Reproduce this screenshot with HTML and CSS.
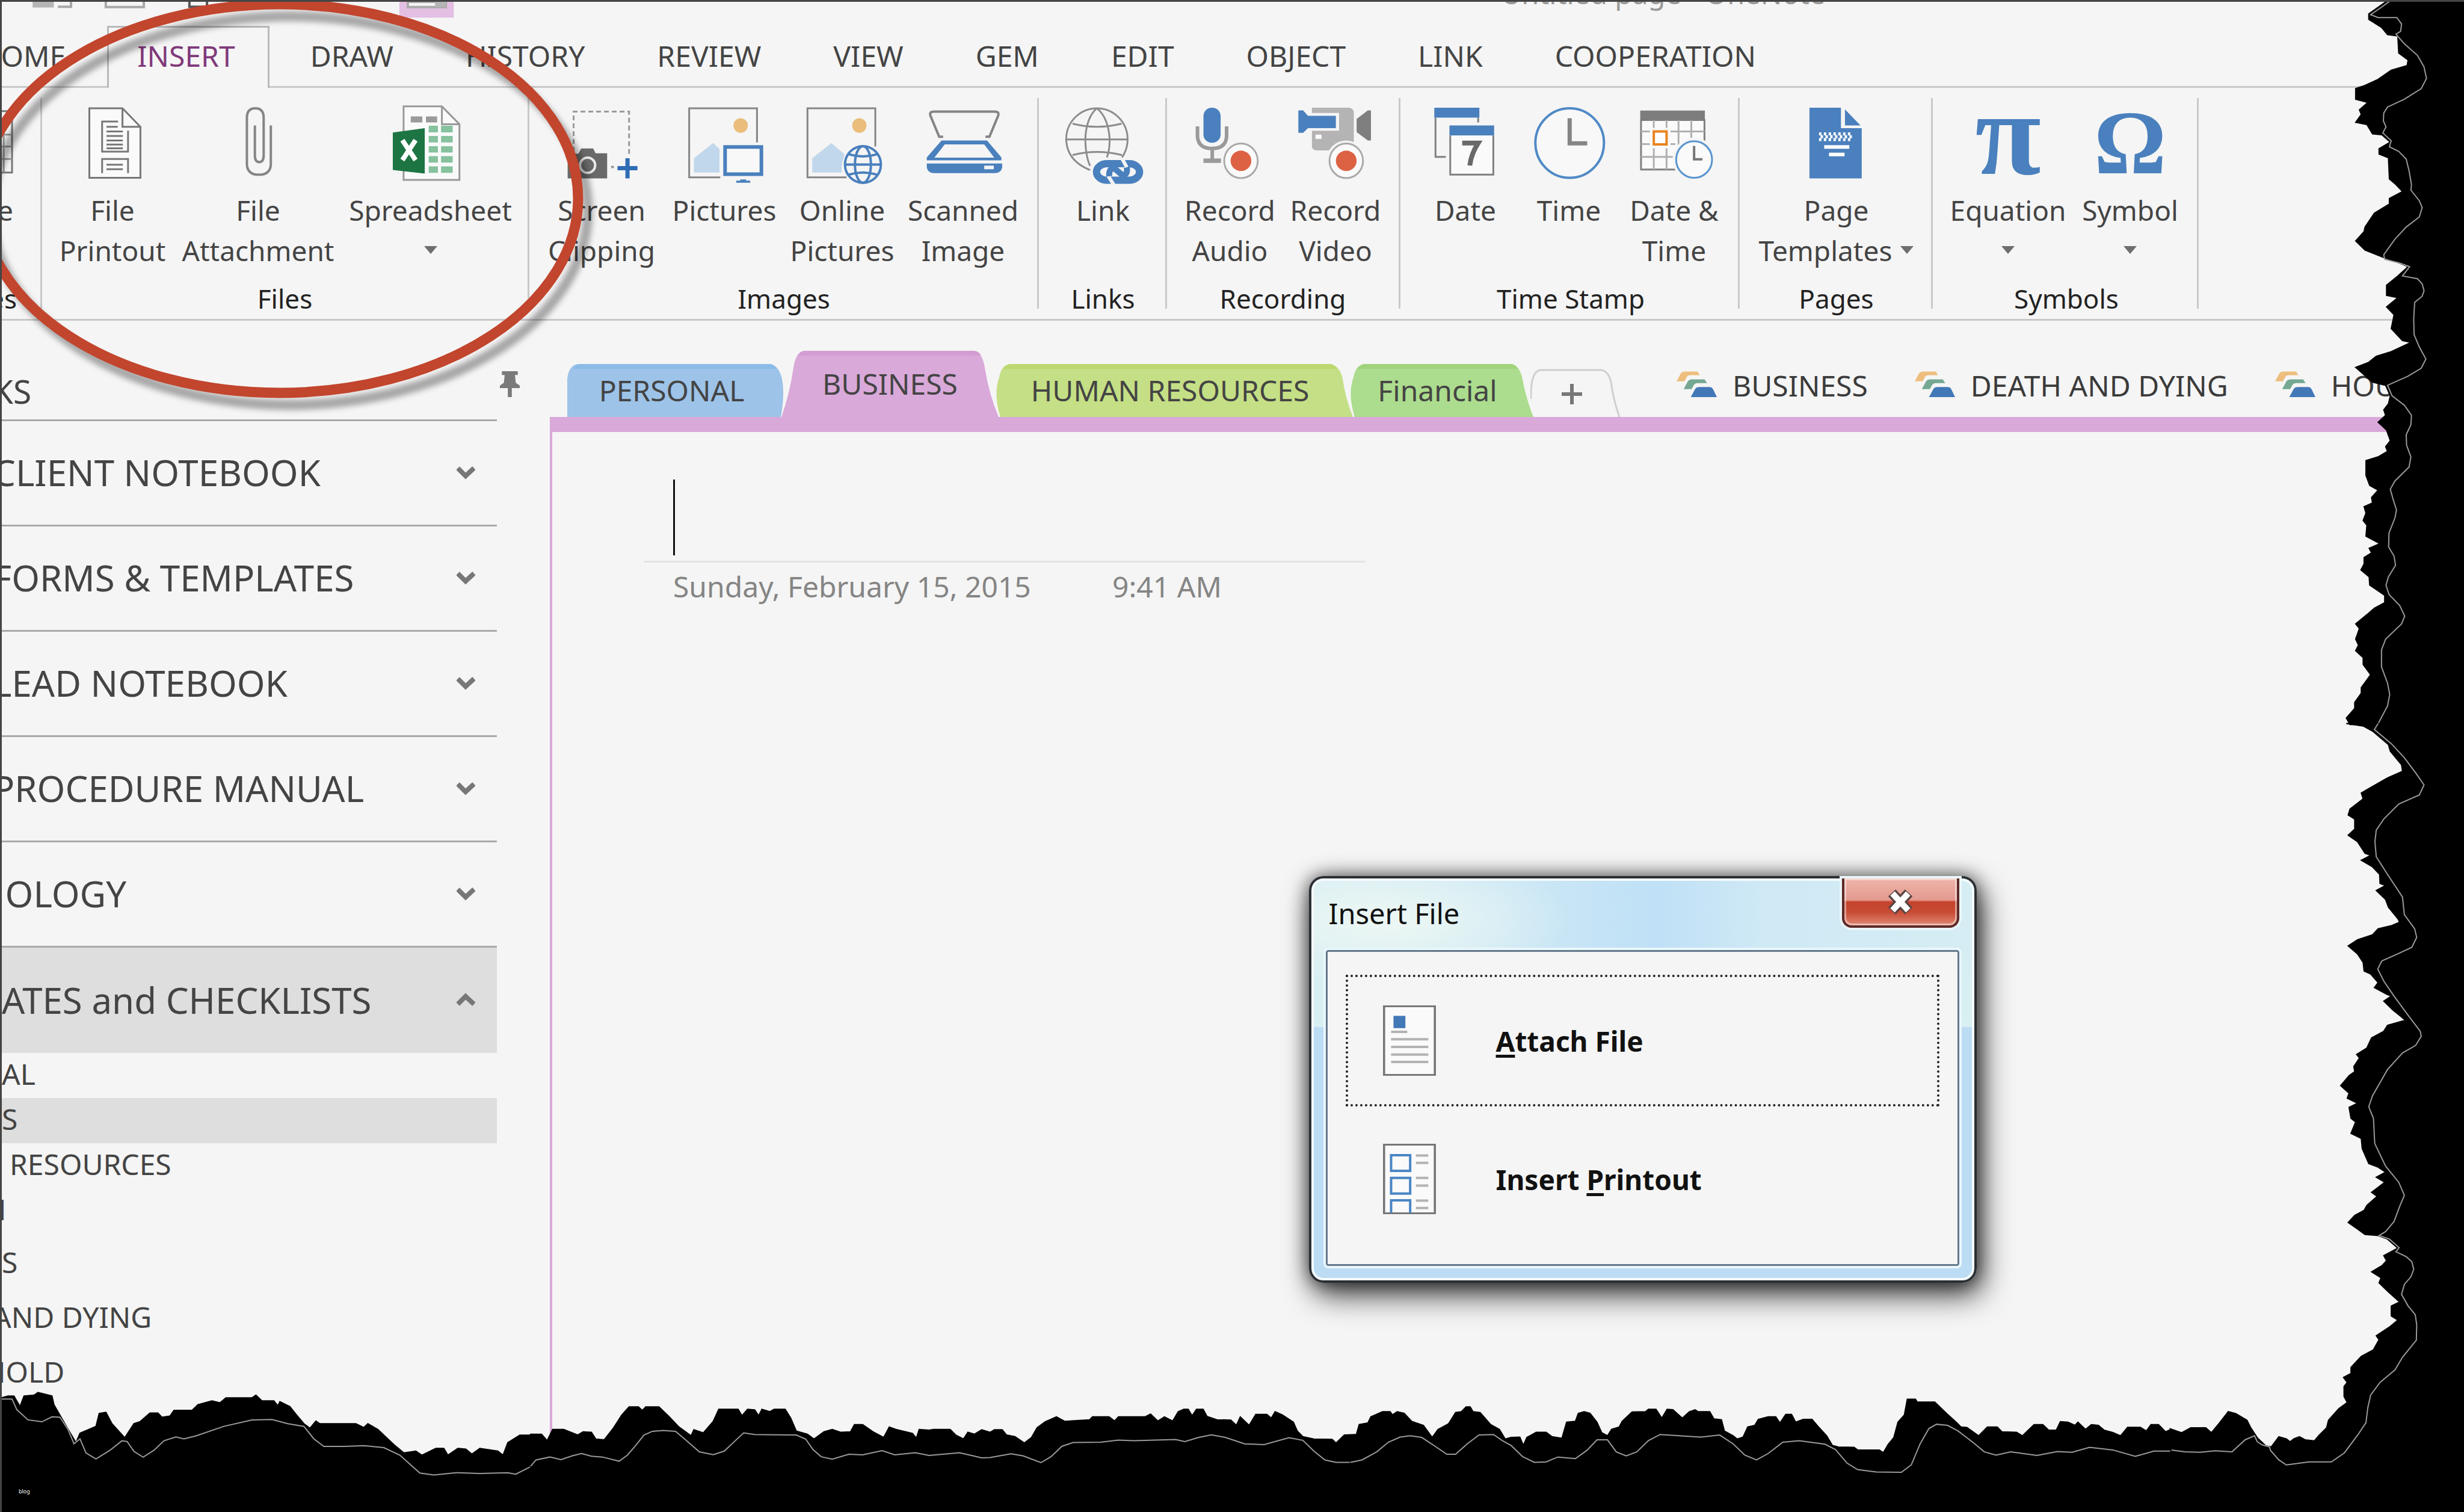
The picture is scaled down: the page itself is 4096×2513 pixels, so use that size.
FILE: index.html
```html
<!DOCTYPE html>
<html lang="en">
<head>
<meta charset="utf-8">
<title>Untitled page - OneNote</title>
<link rel="stylesheet" href="styles.css">
</head>
<body>
<div class="window">
  <header class="titlebar">
    <svg class="quick-access" viewBox="0 5 1143 88" preserveAspectRatio="none" aria-hidden="true">
      <path d="M77 5H130V27H77Z" fill="#b5b5b5"/>
      <path d="M140 24H173V5M260 5V25H355V5" fill="none" stroke="#a8a8a8" stroke-width="4"/>
      <path d="M469 5V24H513V5" fill="none" stroke="#555" stroke-width="4"/>
      <path d="M994 5H1130V66H994Z" fill="#e3bfe3"/>
      <path d="M1015 5H1110V25H1015Z" fill="#f5f5f5" stroke="#aaa" stroke-width="4"/>
      <path d="M1083 5H1110V25H1083Z" fill="#b5b5b5"/>
    </svg>
    <div class="app-title">Untitled page - OneNote</div>
  </header>

  <nav class="ribbon-tabs" aria-label="Ribbon tabs">
    <a class="rtab rtab-home" href="#home">HOME</a>
    <a class="rtab rtab-active" href="#insert">INSERT</a>
    <a class="rtab" href="#draw">DRAW</a>
    <a class="rtab" href="#history">HISTORY</a>
    <a class="rtab" href="#review">REVIEW</a>
    <a class="rtab" href="#view">VIEW</a>
    <a class="rtab" href="#gem">GEM</a>
    <a class="rtab" href="#edit">EDIT</a>
    <a class="rtab" href="#object">OBJECT</a>
    <a class="rtab" href="#link">LINK</a>
    <a class="rtab" href="#cooperation">COOPERATION</a>
  </nav>

  <section class="ribbon" aria-label="Insert">
    <div class="group g-tables">
      <div class="tools">
        <button class="tool" type="button">
          <svg class="icon" viewBox="-98 405 130 299" preserveAspectRatio="none"><g fill="none" stroke="#777" stroke-width="3"><path d="M-90 425H29V660H-90Z"/><path d="M-90 515H29M-90 560H29M-90 608H29M8 450V660" stroke="#999"/></g></svg>
          <span>Table</span>
        </button>
      </div>
      <div class="group-name">Tables</div>
    </div>

    <div class="group g-files">
      <div class="tools">
        <button class="tool" type="button">
          <svg class="icon" viewBox="182 405 196 299" preserveAspectRatio="none"><g fill="none" stroke="#777" stroke-width="3"><path d="M222 414H305L350 485V680H222Z" fill="#fafafa"/><path d="M305 414V485H350M294 465H254V580H319V500M254 662V608H319V662"/><path d="M265 485H293M265 503H306M265 520H306M265 537H306M265 553H306M265 567H306M265 630H306M265 647H306"/></g></svg>
          <span>File<br>Printout</span>
        </button>
        <button class="tool" type="button">
          <svg class="icon" viewBox="546 405 196 299" preserveAspectRatio="none"><path d="M676 480V625Q676 668 646 668Q616 668 616 625V450Q616 414 637 414Q658 414 658 450V595Q658 620 647 620Q636 620 636 595V480" fill="none" stroke="#858585" stroke-width="4"/></svg>
          <span>File<br>Attachment</span>
        </button>
        <button class="tool" type="button">
          <svg class="icon" viewBox="977 405 196 299" preserveAspectRatio="none"><path d="M1007 407H1103L1147 475V688H1007Z" fill="#fafafa" stroke="#999" stroke-width="3"/><path d="M1103 407V475H1147" fill="none" stroke="#999" stroke-width="3"/><path d="M1025 445h29v23h-29zM1063 445h28v23h-28z" fill="#9a9a9a"/><path d="M1070 481h23v25h-23zM1101 481h29v25h-29zM1070 520h23v25h-23zM1101 520h29v25h-29zM1070 559h23v24h-23zM1101 559h29v24h-29zM1070 597h23v25h-23zM1101 597h29v25h-29zM1070 636h23v25h-23zM1101 636h29v25h-29z" fill="#85c29d"/><path d="M980 507L1060 490V664L980 650Z" fill="#1d7544"/><path d="M1004 536L1037 612M1037 536L1004 612" stroke="#fff" stroke-width="8" fill="none"/></svg>
          <span>Spreadsheet</span>
          <i class="caret-down"></i>
        </button>
      </div>
      <div class="group-name">Files</div>
    </div>

    <div class="group g-images">
      <div class="tools">
        <button class="tool" type="button">
          <svg class="icon" viewBox="80 405 196 299" preserveAspectRatio="none"><path d="M108 580V427H247V595" fill="none" stroke="#999" stroke-width="3" stroke-dasharray="8 5"/><path d="M93 588H120L127 568H157L163 586H192V682H93Z" fill="#696969"/><ellipse cx="143" cy="632" rx="19" ry="29" fill="#696969" stroke="#e8e8e8" stroke-width="4"/><path d="M202 634h7v9h-7z" fill="#999"/><path d="M243 605V682M218 643H268" stroke="#2f6db5" stroke-width="7"/></svg>
          <span>Screen<br>Clipping</span>
        </button>
        <button class="tool" type="button">
          <svg class="icon" viewBox="387 405 196 299" preserveAspectRatio="none"><path d="M567 545V414H397V678H475" fill="none" stroke="#858585" stroke-width="3"/><ellipse cx="526" cy="480" rx="18" ry="28" fill="#eabd7c"/><path d="M409 660V605L457 547L473 570V660Z" fill="#c1d7eb"/><rect x="487" y="562" width="91" height="104" fill="#f8f8f8" stroke="#4a80bd" stroke-width="6"/><path d="M525 686H540V691H550V699H515V691H525Z" fill="#4a80bd"/></svg>
          <span>Pictures</span>
        </button>
        <button class="tool" type="button">
          <svg class="icon" viewBox="681 405 196 299" preserveAspectRatio="none"><path d="M862 560V414H692V678H790" fill="none" stroke="#858585" stroke-width="3"/><ellipse cx="822" cy="480" rx="18" ry="28" fill="#eabd7c"/><path d="M704 660V605L752 547L785 590L778 630V660Z" fill="#c1d7eb"/><g fill="none" stroke="#4a80bd" stroke-width="4"><ellipse cx="831" cy="629" rx="45" ry="70" fill="#f5f5f5"/><ellipse cx="831" cy="629" rx="20" ry="70"/><path d="M786 629H876M795 590Q831 606 867 590M795 668Q831 652 867 668"/></g></svg>
          <span>Online<br>Pictures</span>
        </button>
        <button class="tool" type="button">
          <svg class="icon" viewBox="984 405 196 299" preserveAspectRatio="none"><path d="M1032 523H1022L1000 442Q997 427 1009 427H1161Q1173 427 1170 442L1148 523H1138" fill="none" stroke="#858585" stroke-width="4"/><path d="M1028 537H1142L1178 602V613H991V602ZM1036 552L1010 603H1160L1135 552Z" fill="#4a80bd" fill-rule="evenodd"/><path d="M991 625H1180V640Q1178 662 1160 662H1010Q993 662 991 640ZM1135 633V647H1159V633Z" fill="#4a80bd" fill-rule="evenodd"/></svg>
          <span>Scanned<br>Image</span>
        </button>
      </div>
      <div class="group-name">Images</div>
    </div>

    <div class="group g-links">
      <div class="tools">
        <button class="tool" type="button">
          <svg class="icon" viewBox="127 405 196 299" preserveAspectRatio="none"><g fill="none" stroke="#8c8c8c" stroke-width="3"><path d="M272 602Q286 570 286 533A77 119 0 1 0 132 533Q134 615 192 650"/><path d="M209 414Q182 450 180 533Q181 600 192 634M209 414Q238 450 241 533Q241 575 234 602M132 533H286M148 473Q209 497 271 473M148 593Q209 569 272 593"/></g><rect x="208" y="626" width="108" height="63" rx="26" ry="32" fill="#f5f5f5" stroke="#4a80bd" stroke-width="12"/><path d="M272 606L284 640M237 672L252 708" stroke="#f5f5f5" stroke-width="6"/><path d="M240 674Q238 645 252 643L274 671Q287 668 284 640" fill="none" stroke="#4a80bd" stroke-width="10"/></svg>
          <span>Link</span>
        </button>
      </div>
      <div class="group-name">Links</div>
    </div>

    <div class="group g-recording">
      <div class="tools">
        <button class="tool" type="button">
          <svg class="icon" viewBox="445 405 196 299" preserveAspectRatio="none"><rect x="476" y="412" width="43" height="134" rx="21" ry="32" fill="#4a80bd"/><path d="M461 483V522Q463 568 498 568Q532 568 534 522V483M498 568V615" fill="none" stroke="#9a9a9a" stroke-width="6"/><path d="M476 606H520V623H476Z" fill="#9a9a9a"/><ellipse cx="570" cy="615" rx="48" ry="75" fill="#f5f5f5"/><ellipse cx="570" cy="615" rx="42" ry="66" fill="#fafafa" stroke="#aaa" stroke-width="3"/><ellipse cx="570" cy="615" rx="26" ry="39" fill="#dc6243"/></svg>
          <span>Record<br>Audio</span>
        </button>
        <button class="tool" type="button">
          <svg class="icon" viewBox="709 405 196 299" preserveAspectRatio="none"><path d="M748 412H840Q853 414 853 432V575H760Q748 573 748 560Z" fill="#b4b4b4"/><path d="M708 412H732L743 432H816V500H743L732 518H708Z" fill="#f5f5f5"/><path d="M714 422H726L738 443H808V490H738L726 508H714Z" fill="#4a80bd"/><path d="M860 455L888 422H896V537H888L860 505Z" fill="#7f7f7f"/><path d="M757 515h15v16h-15z" fill="#fff"/><ellipse cx="834" cy="615" rx="50" ry="78" fill="#f5f5f5"/><ellipse cx="834" cy="615" rx="42" ry="66" fill="#fafafa" stroke="#aaa" stroke-width="3"/><ellipse cx="834" cy="615" rx="26" ry="39" fill="#dc6243"/></svg>
          <span>Record<br>Video</span>
        </button>
      </div>
      <div class="group-name">Recording</div>
    </div>

    <div class="group g-time">
      <div class="tools">
        <button class="tool" type="button">
          <svg class="icon" viewBox="1034 405 196 299" preserveAspectRatio="none"><path d="M1057 450V600H1083M1164 450V468" fill="none" stroke="#808080" stroke-width="3"/><path d="M1054 412h113v38h-113zM1092 480h112v38h-112z" fill="#4a80bd"/><path d="M1094 518V668H1202V518" fill="#fafafa" stroke="#808080" stroke-width="3"/><path d="M1124 547H1164Q1146 590 1143 633" fill="none" stroke="#696969" stroke-width="8"/></svg>
          <span>Date</span>
        </button>
        <button class="tool" type="button">
          <svg class="icon" viewBox="1293 405 196 299" preserveAspectRatio="none"><ellipse cx="1393" cy="547" rx="86" ry="133" fill="#f8f8f8" stroke="#4f8ac6" stroke-width="4"/><path d="M1393 452V548H1437" fill="none" stroke="#858585" stroke-width="7"/></svg>
          <span>Time</span>
        </button>
        <button class="tool" type="button">
          <svg class="icon" viewBox="109 405 196 299" preserveAspectRatio="none"><path d="M124 459V648H283V459Z" fill="#fafafa" stroke="#808080" stroke-width="3"/><path d="M156 459V648M188 459V648M218 459V560M250 459V540M124 503H283M124 551H210M124 600H205" fill="none" stroke="#b0b0b0" stroke-width="3"/><path d="M122 423h162v36h-162z" fill="#7d7d7d"/><path d="M146 489h52v78h-52z" fill="#f8f8f8"/><rect x="156" y="503" width="32" height="49" fill="#fff" stroke="#e8831f" stroke-width="4"/><ellipse cx="257" cy="610" rx="54" ry="84" fill="#f5f5f5"/><ellipse cx="257" cy="610" rx="45" ry="70" fill="#fafafa" stroke="#5a95cf" stroke-width="3"/><path d="M257 558V609H278" fill="none" stroke="#777" stroke-width="4"/></svg>
          <span>Date &amp;<br>Time</span>
        </button>
      </div>
      <div class="group-name">Time Stamp</div>
    </div>

    <div class="group g-pages">
      <div class="tools">
        <button class="tool" type="button">
          <svg class="icon" viewBox="513 405 196 299" preserveAspectRatio="none"><path d="M543 412H622V490H674V682H543ZM632 418L671 480H632Z" fill="#4a80bd"/><path d="M567 512H650M567 534H650" stroke="#fff" stroke-width="5" stroke-dasharray="4 4"/><path d="M571 523H650" stroke="#fff" stroke-width="5" stroke-dasharray="4 4"/><path d="M580 562H643M592 591H631" stroke="#fff" stroke-width="6"/></svg>
          <span>Page<br>Templates<i class="caret-inline"></i></span>
        </button>
      </div>
      <div class="group-name">Pages</div>
    </div>

    <div class="group g-symbols">
      <div class="tools">
        <button class="tool" type="button">
          <span class="glyph glyph-pi" aria-hidden="true">π</span>
          <span>Equation</span>
          <i class="caret-down"></i>
        </button>
        <button class="tool" type="button">
          <span class="glyph" aria-hidden="true">Ω</span>
          <span>Symbol</span>
          <i class="caret-down"></i>
        </button>
      </div>
      <div class="group-name">Symbols</div>
    </div>
  </section>

  <div class="workspace">
    <aside class="sidebar">
      <div class="side-head">
        <h2 class="clip">KS</h2>
        <button class="pin" type="button" aria-label="Pin notebook pane"><svg viewBox="0 0 50 98" preserveAspectRatio="none"><path d="M5 0H45V14H38L40 44L50 54V64H30V98H20V64H0V54L10 44L12 14H5Z" fill="#7a7a7a"/></svg></button>
      </div>
      <ul class="notebooks">
        <li><button type="button"><span class="clip">CLIENT NOTEBOOK</span><svg class="chev" viewBox="0 0 31 24"><path d="M2 5L15 18L29 5"/></svg></button></li>
        <li><button type="button"><span class="clip">FORMS &amp; TEMPLATES</span><svg class="chev" viewBox="0 0 31 24"><path d="M2 5L15 18L29 5"/></svg></button></li>
        <li><button type="button"><span class="clip">LEAD NOTEBOOK</span><svg class="chev" viewBox="0 0 31 24"><path d="M2 5L15 18L29 5"/></svg></button></li>
        <li><button type="button"><span class="clip">PROCEDURE MANUAL</span><svg class="chev" viewBox="0 0 31 24"><path d="M2 5L15 18L29 5"/></svg></button></li>
        <li><button type="button"><span class="clip-more">NOLOGY</span><svg class="chev" viewBox="0 0 31 24"><path d="M2 5L15 18L29 5"/></svg></button></li>
        <li class="open"><button type="button"><span>ATES and CHECKLISTS</span><svg class="chev" viewBox="0 0 31 24"><path d="M2 19L15 6L29 19"/></svg></button></li>
      </ul>
      <ul class="sections">
        <li><a href="#personal">AL</a></li>
        <li class="selected"><a href="#business">S</a></li>
        <li class="inset"><a href="#hr">RESOURCES</a></li>
        <li><a class="clip-mid" href="#n">N</a></li>
        <li class="tall"><a href="#s">S</a></li>
        <li class="tall"><a class="clip" href="#dying">AND DYING</a></li>
        <li class="tall"><a class="clip-mid" href="#household">HOLD</a></li>
      </ul>
    </aside>

    <main class="content">
      <div class="section-tabs">
        <button class="stab t-personal" type="button"><svg viewBox="0 0 361 88" preserveAspectRatio="none"><path d="M0 88V24Q3 0 20 0H338Q352 3 357 25Q362 50 355 88Z" fill="#9dc3e8"/><path d="M12 4Q16 0 22 0H336Q342 0 348 8H8Z" fill="#8bbce8"/></svg><span>PERSONAL</span></button>
        <button class="stab t-business" type="button"><svg viewBox="0 0 361 110" preserveAspectRatio="none"><path d="M0 110Q14 70 20 28Q24 0 40 0H320Q334 2 338 28Q345 72 361 110Z" fill="#d9a9d9"/><path d="M30 4Q34 0 40 0H320Q326 0 331 6V8H28Z" fill="#d39dd3"/></svg><span>BUSINESS</span></button>
        <button class="stab t-hr" type="button"><svg viewBox="0 0 594 88" preserveAspectRatio="none"><path d="M8 88Q-4 50 6 22Q10 0 26 0H556Q572 2 577 25Q581 55 594 88Z" fill="#c4df85"/><path d="M16 4Q20 0 26 0H556Q562 0 568 8H13Z" fill="#bcd86f"/></svg><span>HUMAN RESOURCES</span></button>
        <button class="stab t-financial" type="button"><svg viewBox="0 0 305 88" preserveAspectRatio="none"><path d="M8 88Q-4 50 6 22Q10 0 26 0H268Q282 2 287 25Q292 55 305 88Z" fill="#acdc8d"/><path d="M16 4Q20 0 26 0H268Q274 0 280 8H13Z" fill="#a0d37c"/></svg><span>Financial</span></button>
        <button class="stab t-new" type="button" aria-label="New section"><svg viewBox="0 0 149 80" preserveAspectRatio="none"><path d="M1 50Q0 2 18 2H118Q130 4 134 22Q138 52 148 80" fill="none" stroke="#cfcfcf" stroke-width="3"/><path d="M52 42H86M69 25V59" stroke="#777" stroke-width="6"/></svg></button>
        <nav class="quick-links" aria-label="Quick links">
          <a href="#q-business"><svg class="qicon" viewBox="216 1420 102 98" preserveAspectRatio="none"><path d="M216 1458L226 1430Q229 1421 238 1421H269L275 1435H252Q243 1435 240 1447L236 1458Z" fill="#edbe7d"/><path d="M234 1488L244 1460Q247 1451 256 1451H287L293 1465H270Q261 1465 258 1477L254 1488Z" fill="#74a892"/><path d="M252 1518L262 1490Q265 1480 274 1480H299Q306 1480 309 1490L318 1518Z" fill="#4378b8"/></svg>BUSINESS</a>
          <a href="#q-death"><svg class="qicon" viewBox="216 1420 102 98" preserveAspectRatio="none"><path d="M216 1458L226 1430Q229 1421 238 1421H269L275 1435H252Q243 1435 240 1447L236 1458Z" fill="#edbe7d"/><path d="M234 1488L244 1460Q247 1451 256 1451H287L293 1465H270Q261 1465 258 1477L254 1488Z" fill="#74a892"/><path d="M252 1518L262 1490Q265 1480 274 1480H299Q306 1480 309 1490L318 1518Z" fill="#4378b8"/></svg>DEATH AND DYING</a>
          <a href="#q-household"><svg class="qicon" viewBox="216 1420 102 98" preserveAspectRatio="none"><path d="M216 1458L226 1430Q229 1421 238 1421H269L275 1435H252Q243 1435 240 1447L236 1458Z" fill="#edbe7d"/><path d="M234 1488L244 1460Q247 1451 256 1451H287L293 1465H270Q261 1465 258 1477L254 1488Z" fill="#74a892"/><path d="M252 1518L262 1490Q265 1480 274 1480H299Q306 1480 309 1490L318 1518Z" fill="#4378b8"/></svg>HOUS</a>
        </nav>
      </div>
      <div class="section-bar"></div>
      <article class="page">
        <div class="page-title">
          <span class="text-caret"></span>
          <input type="text" aria-label="Page title">
        </div>
        <div class="page-date"><span>Sunday, February 15, 2015</span><span>9:41 AM</span></div>
      </article>
    </main>
  </div>

  <section class="dialog" role="dialog" aria-labelledby="dlg-title">
    <div class="dlg-bar">
      <h3 id="dlg-title">Insert File</h3>
      <button class="dlg-close" type="button" aria-label="Close"><svg viewBox="0 0 46 42"><path d="M9 6L37 36M37 6L9 36" stroke="#5c4444" stroke-width="17"/><path d="M10 7L36 35M36 7L10 35" stroke="#fff" stroke-width="10"/></svg></button>
    </div>
    <div class="dlg-body">
      <button class="choice focused" type="button">
        <svg class="choice-icon" viewBox="222 521 111 229" preserveAspectRatio="none"><path d="M224 523H331V748H224Z" fill="#fafafa" stroke="#777" stroke-width="4"/><path d="M244 555h25v40h-25z" fill="#4378b8"/><path d="M239 607H273M239 631H317M239 656H317M239 681H317M239 705H317" stroke="#b3b3b3" stroke-width="4"/></svg>
        <span><u>A</u>ttach File</span>
      </button>
      <button class="choice" type="button">
        <svg class="choice-icon" viewBox="222 970 111 229" preserveAspectRatio="none"><path d="M224 972H331V1197H224Z" fill="#fafafa" stroke="#777" stroke-width="4"/><path d="M239 1007H279V1058H239ZM239 1081H279V1132H239ZM239 1194V1154H279V1194" fill="none" stroke="#4a86c5" stroke-width="4"/><path d="M291 1008H317M291 1032H317M291 1081H317M291 1106H317M291 1155H317M291 1179H317" stroke="#b3b3b3" stroke-width="4"/></svg>
        <span>Insert <u>P</u>rintout</span>
      </button>
    </div>
  </section>

  <!-- hand-drawn callout around the Files group -->
  <svg class="callout" viewBox="0 0 1040 720" aria-hidden="true">
    <ellipse class="callout-shadow" cx="481" cy="350" rx="496" ry="323"/>
    <ellipse class="callout-ring" cx="465" cy="330" rx="496" ry="323"/>
  </svg>

  <!-- torn paper edge on the right and bottom sides -->
  <svg class="torn" viewBox="0 0 4096 2513" preserveAspectRatio="none" aria-hidden="true">
    <g transform="translate(3607.6 0) scale(.3114 .767)">
      <polygon points="1165,0 1060,30 1060,42 1130,60 1160,75 1215,78 1220,115 1270,130 1265,142 1180,152 1110,172 1040,185 990,192 990,215 1055,222 1010,238 1020,248 990,265 1050,270 1080,290 1130,292 1175,308 1115,322 1115,334 1165,342 1170,388 1205,400 1240,415 1170,430 1170,442 1090,462 1040,492 1035,502 990,522 1040,542 1140,558 1200,566 1270,578 1215,598 1155,618 1155,640 1215,645 1155,665 1195,682 1180,712 1240,738 1285,742 1180,762 1100,772 1060,785 990,796 1080,828 1150,835 1175,858 1165,875 1140,888 1150,900 1110,915 1155,932 1175,955 1150,968 1160,978 1110,990 1045,998 1045,1030 1065,1052 1110,1062 1075,1078 1080,1090 1035,1098 1045,1112 1030,1128 1050,1138 1045,1162 1120,1178 1062,1188 1075,1198 1035,1208 1035,1222 1018,1235 1062,1250 1065,1268 1145,1290 1145,1306 1090,1318 1050,1332 990,1352 1010,1362 990,1385 1005,1398 990,1410 1030,1425 1030,1440 1070,1462 1020,1490 1020,1502 985,1522 985,1535 940,1556 960,1570 1570,1570 1570,0"/>
      <polyline points="1180,0 1130,15 1070,32 1110,38 1210,38 1235,52 1230,68 1205,74 1250,95 1320,120 1355,145 1368,170 1340,192 1250,215 1160,232 1140,245 1138,262 1152,275 1135,288 1180,305 1170,318 1220,328 1260,345 1275,370 1288,400 1285,412 1330,435 1345,450 1330,470 1260,492 1200,518 1140,552 1145,562 1225,570 1278,578 1240,598 1320,604 1345,615 1355,630 1345,642 1305,655 1300,690 1302,725 1330,752 1365,778 1340,798 1270,815 1160,835 1185,858 1250,878 1288,900 1285,920 1260,942 1262,965 1285,990 1275,1012 1200,1042 1175,1060 1190,1082 1208,1105 1200,1122 1168,1155 1166,1185 1195,1205 1203,1225 1165,1250 1152,1268 1168,1288 1225,1312 1252,1335 1235,1352 1150,1385 1128,1408 1128,1445 1160,1480 1172,1505 1160,1530 1110,1568"/>
    </g>
    <g transform="translate(3607.6 1202.5) scale(.3114 .836)">
      <polygon points="940,0 1030,5 1080,15 1165,42 1175,55 1235,82 1240,95 1160,108 1080,125 1020,138 1030,150 960,170 950,182 985,190 985,210 950,222 1000,235 1040,258 1070,262 1020,272 1080,285 1118,300 1120,318 1150,322 1100,332 1150,350 1165,365 1215,388 1225,395 1180,402 1110,408 1080,420 1000,430 950,442 1000,458 1030,475 1035,492 1070,498 1110,515 1090,525 1155,538 1180,542 1140,552 1190,570 1230,582 1255,590 1160,600 1140,612 1075,625 1050,645 995,658 1010,665 980,682 985,692 955,700 910,720 955,735 945,745 1000,755 955,763 965,785 990,792 965,815 1020,825 1025,845 1060,875 1110,882 1150,892 1100,902 1145,912 1075,932 1105,940 1050,958 1035,968 985,978 950,992 1000,1005 1040,1016 1110,1018 1160,1025 1215,1043 1140,1058 1155,1068 1130,1078 1075,1090 1125,1102 1115,1112 1165,1130 1225,1150 1180,1158 1180,1178 1215,1186 1170,1200 1100,1217 1115,1225 1085,1245 1020,1258 965,1280 965,1292 925,1300 945,1310 928,1318 928,1338 945,1350 900,1362 845,1385 835,1400 795,1415 770,1426 720,1424 690,1418 660,1422 640,1428 620,1422 580,1418 540,1438 510,1436 465,1420 430,1400 410,1385 350,1372 310,1368 260,1392 220,1410 190,1400 110,1400 60,1410 0,1402 0,1570 1570,1570 1570,0"/>
      <polyline points="1110,0 1090,12 1180,40 1250,68 1310,98 1355,122 1330,142 1220,160 1140,190 1100,212 1093,235 1100,265 1160,300 1240,345 1250,380 1305,408 1316,425 1290,445 1220,457 1130,472 1108,488 1140,512 1195,542 1270,580 1335,612 1340,622 1310,640 1240,655 1160,688 1080,740 1060,762 1085,785 1092,835 1150,880 1220,912 1250,938 1225,960 1195,990 1150,1010 1115,1018 1170,1025 1222,1042 1205,1050 1260,1060 1290,1070 1300,1085 1285,1100 1250,1115 1235,1135 1270,1158 1308,1175 1316,1195 1314,1226 1240,1260 1200,1285 1120,1310 1070,1335 1055,1360 1045,1390 1000,1415 930,1450 860,1468 740,1468 620,1474 580,1464 535,1445 530,1438 490,1434 465,1428 450,1416 400,1424 330,1448 240,1446 160,1449 80,1448 0,1444"/>
    </g>
    <g transform="translate(0 1523.3) scale(.6647 .6314)">
      <polygon points="0,1268 20,1262 35,1262 50,1290 60,1262 85,1260 95,1253 130,1262 135,1285 165,1340 190,1385 200,1360 240,1342 248,1308 265,1305 280,1335 312,1372 335,1335 350,1330 375,1307 395,1307 405,1318 425,1315 435,1300 480,1300 495,1285 530,1275 550,1280 565,1267 630,1267 640,1260 655,1275 685,1275 695,1288 700,1277 725,1290 740,1310 760,1335 775,1347 790,1328 800,1335 865,1335 890,1335 910,1345 920,1335 945,1350 985,1390 1010,1412 1040,1407 1055,1418 1090,1400 1110,1400 1120,1418 1145,1400 1165,1402 1180,1415 1200,1400 1245,1407 1258,1418 1270,1385 1300,1365 1340,1365 1340,1570 0,1570"/>
      <polyline points="0,1270 30,1270 42,1298 70,1325 105,1330 130,1317 150,1318 170,1350 185,1388 200,1375 215,1412 240,1428 275,1405 305,1380 318,1382 335,1408 358,1423 385,1405 410,1380 440,1370 460,1375 490,1367 560,1342 630,1325 680,1324 720,1335 760,1342 785,1375 810,1395 860,1395 910,1393 960,1398 1000,1418 1050,1465 1085,1470 1140,1464 1200,1466 1270,1464 1290,1468 1327,1448"/>
    </g>
    <g transform="translate(881.9 2164.6) scale(.9203 .2672)">
      <polygon points="0,820 20,820 30,860 40,790 60,790 85,825 95,805 110,808 118,850 133,855 150,780 165,700 178,650 195,650 202,672 208,650 232,650 250,710 268,775 290,830 295,792 312,812 330,740 340,665 375,665 382,705 392,665 405,668 412,705 418,665 432,680 440,665 460,665 470,720 480,800 500,820 512,850 530,805 545,790 560,808 578,805 585,760 600,760 620,808 638,840 648,775 660,790 690,815 697,845 702,790 720,795 728,790 758,790 768,825 782,850 790,808 802,820 815,792 830,808 838,792 852,792 860,825 875,835 892,875 905,840 915,780 930,742 950,712 965,740 1010,730 1015,712 1045,712 1055,738 1062,712 1110,712 1120,695 1133,738 1145,712 1160,738 1170,680 1180,665 1188,665 1195,705 1203,665 1215,665 1222,710 1240,730 1265,732 1275,765 1282,712 1298,765 1310,697 1330,697 1338,720 1345,680 1358,700 1378,745 1385,800 1395,835 1415,850 1448,852 1455,875 1470,825 1490,822 1490,1310 0,1310"/>
      <polyline points="0,1020 10,980 35,962 55,978 75,955 92,940 110,957 130,962 160,988 175,950 190,890 205,825 220,802 240,797 262,802 280,855 305,930 330,947 350,925 370,860 385,812 405,822 480,825 497,850 510,915 525,960 545,975 575,945 600,948 635,922 658,948 695,935 720,952 775,935 815,967 830,965 868,942 890,955 922,997 940,960 960,895 980,872 1030,870 1062,857 1090,860 1165,853 1182,866 1205,842 1230,824 1255,840 1290,880 1325,885 1370,842 1395,858 1415,925 1435,980 1455,995 1481,995"/>
    </g>
    <g transform="translate(2244.8 2164.6) scale(.9714 .2672)">
      <polygon points="0,825 10,825 15,760 30,750 35,712 55,680 68,680 72,700 80,680 92,690 105,740 125,765 140,840 150,790 168,755 180,685 190,680 198,650 205,650 210,680 222,685 240,760 255,790 265,850 275,840 290,838 296,890 302,840 318,808 335,808 345,835 362,845 370,745 385,740 390,690 400,680 410,690 422,745 430,810 440,830 447,790 460,775 465,740 482,682 505,680 510,665 523,665 533,720 542,665 552,668 568,720 580,680 590,668 595,680 615,680 622,725 635,730 640,800 655,830 662,850 672,838 680,775 692,765 698,728 715,712 728,712 735,750 745,697 755,697 762,745 775,728 790,728 800,770 815,830 825,890 835,900 862,902 868,918 905,918 912,935 920,885 930,840 937,745 948,700 953,602 967,602 970,620 1000,620 1020,690 1035,740 1045,775 1055,778 1075,830 1090,775 1107,775 1115,805 1140,808 1150,830 1160,795 1170,760 1185,760 1195,795 1208,795 1215,742 1228,745 1240,765 1245,745 1258,790 1268,760 1280,765 1290,795 1305,810 1318,830 1330,777 1352,777 1362,800 1370,760 1383,760 1395,805 1404,790 1404,1310 0,1310"/>
      <polyline points="0,995 20,980 45,930 65,870 85,838 102,830 122,840 145,895 165,945 180,945 200,880 220,825 245,822 260,860 275,890 295,960 315,995 335,992 355,962 385,972 405,920 422,855 440,855 455,930 472,955 490,930 510,860 530,822 600,838 632,825 655,880 675,950 695,980 715,940 740,870 768,860 812,882 830,915 850,1000 868,1040 900,1055 943,1057 960,1010 975,880 990,785 1003,758 1022,765 1040,800 1065,870 1085,930 1105,950 1130,930 1175,952 1210,928 1235,932 1265,902 1305,918 1343,958 1375,925 1403,925"/>
    </g>
  </svg>
  <div class="credit">blog</div>
</div>
</body>
</html>
```
FILE: styles.css
```css
* { box-sizing: border-box; }

body {
  margin: 0;
  background: #f5f5f5;
  color: #444;
  font-family: "Noto Sans", "Open Sans", sans-serif;
  font-size: 46px;
}

button, input {
  margin: 0;
  padding: 0;
  border: 0;
  background: none;
  color: inherit;
  font: inherit;
}

a { color: inherit; text-decoration: none; }
h2, h3, ul { margin: 0; padding: 0; font-weight: 400; }
ul { list-style: none; }

.window {
  position: relative;
  display: flex;
  flex-direction: column;
  min-height: 100vh;
  overflow: hidden;
  border-top: 3px solid #444;
  border-left: 3px solid #444;
}

/* title bar */
.titlebar {
  display: flex;
  height: 40px;
  overflow: hidden;
}
.quick-access { width: 760px; height: 38px; flex: none; }
.app-title {
  margin: -46px 0 0 1732px;
  color: #999;
  font-size: 47px;
  line-height: 64px;
  white-space: nowrap;
}

/* ribbon tabs */
.ribbon-tabs {
  display: flex;
  height: 103px;
  border-bottom: 3px solid #c9c9c9;
  font-size: 48px;
  line-height: 100px;
  white-space: nowrap;
}
.rtab { flex: none; padding: 0 60px; }
.rtab-home { margin-left: -37px; padding: 0 69px 0 0; }
.rtab-active {
  height: 103px;
  margin-right: 8px;
  padding: 0 54px 0 47px;
  border: 3px solid #b9b9b9;
  border-bottom: 0;
  background: #f5f5f5;
  color: #80397b;
  line-height: 94px;
}

/* ribbon */
.ribbon {
  display: flex;
  padding-top: 17px;
  border-bottom: 3px solid #c9c9c9;
}
.group {
  flex: none;
  padding: 13px 0 3px;
  background: linear-gradient(#c9c9c9, #c9c9c9) right top / 3px 350px no-repeat;
}
.tools { display: grid; height: 274px; }
.tool {
  display: flex;
  flex-direction: column;
  align-items: center;
  line-height: 67px;
  white-space: nowrap;
}
.icon {
  flex: none;
  width: 130px;
  height: 130px;
  margin-bottom: 10px;
  overflow: visible;
}
.icon *, .choice-icon *, .quick-access * { vector-effect: non-scaling-stroke; }
.group-name {
  margin-top: 16px;
  color: #222;
  font-size: 44px;
  line-height: 60px;
  padding-bottom: 1px;
  text-align: center;
  white-space: nowrap;
}
.glyph {
  height: 140px;
  color: #4a80bd;
  font-family: "Liberation Serif", serif;
  font-size: 150px;
  font-weight: 700;
  line-height: 122px;
}
.glyph-pi { font-size: 200px; line-height: 92px; }
.caret-down, .caret-inline {
  border: 11px solid transparent;
  border-top: 13px solid #6e6e6e;
  border-bottom: 0;
}
.caret-down { margin-top: 26px; }
.caret-inline { display: inline-block; margin: 0 0 12px 14px; }

.g-tables { display: flex; flex-direction: column; align-items: flex-end; width: 67px; overflow: hidden; }
.g-tables .tool { align-items: flex-end; padding-right: 48px; }
.g-tables .icon { width: 86px; }
.g-tables .group-name { padding-right: 42px; }
.g-files { padding-left: 17px; padding-right: 20px; }
.g-files .tools { grid-template-columns: 200px 284px 289px; }
.g-images { padding-left: 18px; padding-right: 19px; }
.g-images .tools { grid-template-columns: 204px 204px 188px 214px; }
.g-links .tools { grid-template-columns: 213px; }
.g-recording { padding-left: 17px; padding-right: 20px; }
.g-recording .tools { grid-template-columns: 175px 176px; }
.g-time { padding-left: 22px; padding-right: 20px; }
.g-time .tools { grid-template-columns: 172px 172px 178px; }
.g-pages .tools { grid-template-columns: 321px; }
.g-symbols { padding-left: 19px; padding-right: 17px; }
.g-symbols .tools { grid-template-columns: 212px 194px; }

/* workspace */
.workspace { display: flex; flex: 1; }

.sidebar { flex: none; width: 911px; overflow: hidden; }
.side-head {
  display: flex;
  justify-content: space-between;
  height: 164px;
  padding: 79px 50px 0 0;
}
.side-head h2 { font-size: 55px; line-height: 75px; }
.pin { width: 33px; height: 43px; margin-top: 5px; }
.pin svg { display: block; width: 33px; height: 43px; }
.clip { margin-left: -15px; }
.clip-mid { margin-left: -29px; }
.clip-more { margin-left: -40px; }

.notebooks, .sections { margin-right: 88px; }
.notebooks li { border-top: 3px solid #a9a9a9; }
.notebooks button {
  display: flex;
  align-items: center;
  justify-content: space-between;
  width: 100%;
  height: 172px;
  padding: 0 36px 2px 0;
  font-size: 60px;
  text-align: left;
  white-space: nowrap;
}
.notebooks .open { background: #dedede; }
.notebooks .open button { height: 175px; }
.chev { width: 31px; height: 24px; fill: none; stroke: #777; stroke-width: 8px; }

.sections { font-size: 48px; line-height: 69px; }
.sections li { display: flex; height: 75px; white-space: nowrap; }
.sections .selected { background: #dedede; }
.sections .inset { padding-left: 13px; }
.sections .tall { height: 91px; padding-top: 13px; }

.content { display: flex; flex: 1; flex-direction: column; min-width: 0; }
.section-tabs {
  display: flex;
  align-items: flex-end;
  height: 160px;
  padding-left: 29px;
  font-size: 48px;
  white-space: nowrap;
}
.stab {
  position: relative;
  flex: none;
  height: 88px;
  margin-right: -5px;
  padding-right: 14px;
  line-height: 88px;
}
.stab svg { position: absolute; inset: 0; width: 100%; height: 100%; }
.stab span { position: relative; }
.t-personal { width: 361px; }
.t-business { z-index: 1; width: 361px; height: 110px; padding-right: 0; line-height: 94px; }
.t-hr { width: 594px; }
.t-financial { width: 305px; }
.t-new { width: 149px; height: 80px; }

.quick-links {
  display: flex;
  gap: 78px;
  height: 88px;
  margin-left: 99px;
  line-height: 72px;
}
.quick-links a { display: flex; gap: 26px; color: #3b3b3b; }
.qicon { width: 67px; height: 43px; margin-top: 12px; }

.section-bar { height: 25px; background: #d9a9d9; }
.page { flex: 1; padding: 79px 0 0 152px; border-left: 4px solid #d9a9d9; }
.page-title {
  display: flex;
  width: 1200px;
  height: 138px;
  padding-left: 49px;
  border-bottom: 3px solid #e3e3e3;
}
.text-caret { width: 4px; height: 126px; background: #111; }
.page-title input { flex: 1; height: 126px; font-size: 80px; outline: 0; }
.page-date {
  display: grid;
  grid-template-columns: 730px auto;
  margin-top: 8px;
  padding-left: 49px;
  color: #858585;
  font-size: 48px;
  line-height: 64px;
}

/* dialog */
.dialog {
  position: absolute;
  top: 1453px;
  left: 53.08%;
  width: 1110px;
  padding: 0 25px 24px 24px;
  border: 4px solid #2b2f34;
  border-radius: 24px;
  background:
    radial-gradient(ellipse 300px 110px at 130px 70px, rgba(240, 249, 243, .8) 10%, transparent) no-repeat,
    linear-gradient(90deg, #d9eef4, #cfe9f5 28%, #bfe0f6 52%, #cfe9f5 68%, #d6edf4) top / 100% 122px no-repeat,
    linear-gradient(#d3ecf3 0, #d9f0f2 246px, #bcdcf3 248px, #bcdcf3 100%);
  box-shadow: inset 0 0 0 4px #f4fbfd, 0 0 30px rgba(0, 0, 0, .6), 8px 20px 50px rgba(0, 0, 0, .75);
  color: #111;
}
.dlg-bar { display: flex; justify-content: space-between; height: 119px; }
.dlg-bar h3 { padding-left: 5px; font-size: 47px; line-height: 116px; }
.dlg-close {
  width: 195px;
  height: 82px;
  border: 4px solid #5e2a26;
  border-top: 0;
  border-radius: 0 0 16px 16px;
  background: linear-gradient(#efb5ab, #e49a8e 46%, #c4432c 50%, #c84b34 72%, #e08a76);
  box-shadow: inset 0 0 0 3px rgba(255, 255, 255, .45), 0 0 0 4px #e9f5f8;
}
.dlg-close svg { display: block; width: 46px; height: 42px; margin: 0 auto; }
.dlg-body {
  padding: 38px 30px 32px 30px;
  border: 3px solid #64778c;
  border-radius: 4px;
  outline: 4px solid #e9f7fb;
  background: #f5f5f5;
}
.choice {
  display: flex;
  align-items: center;
  width: 100%;
  height: 219px;
  padding-left: 58px;
  gap: 100px;
  font-weight: 700;
  border: 4px solid transparent;
}
.choice + .choice { margin-top: 11px; }
.focused { border: 4px dotted #222; }
.choice-icon { width: 88px; height: 117px; }
.choice u { text-decoration-thickness: 5px; text-underline-offset: 5px; }

/* overlays */
.callout { position: absolute; top: -3px; left: -3px; width: 1040px; height: 720px; fill: none; }
.callout-ring { stroke: #c2452d; stroke-width: 17px; }
.callout-shadow { stroke: #000; stroke-opacity: .32; stroke-width: 17px; filter: blur(5px); }
.torn { position: absolute; top: -3px; left: -3px; width: calc(100% + 3px); height: calc(100% + 3px); }
.torn polygon { fill: #000; stroke: #000; stroke-width: 2px; vector-effect: non-scaling-stroke; }
.torn polyline { fill: none; stroke: #999; stroke-width: 2px; vector-effect: non-scaling-stroke; }
.credit { position: absolute; bottom: 28px; left: 28px; color: #fff; font-size: 9px; line-height: 12px; }
```
